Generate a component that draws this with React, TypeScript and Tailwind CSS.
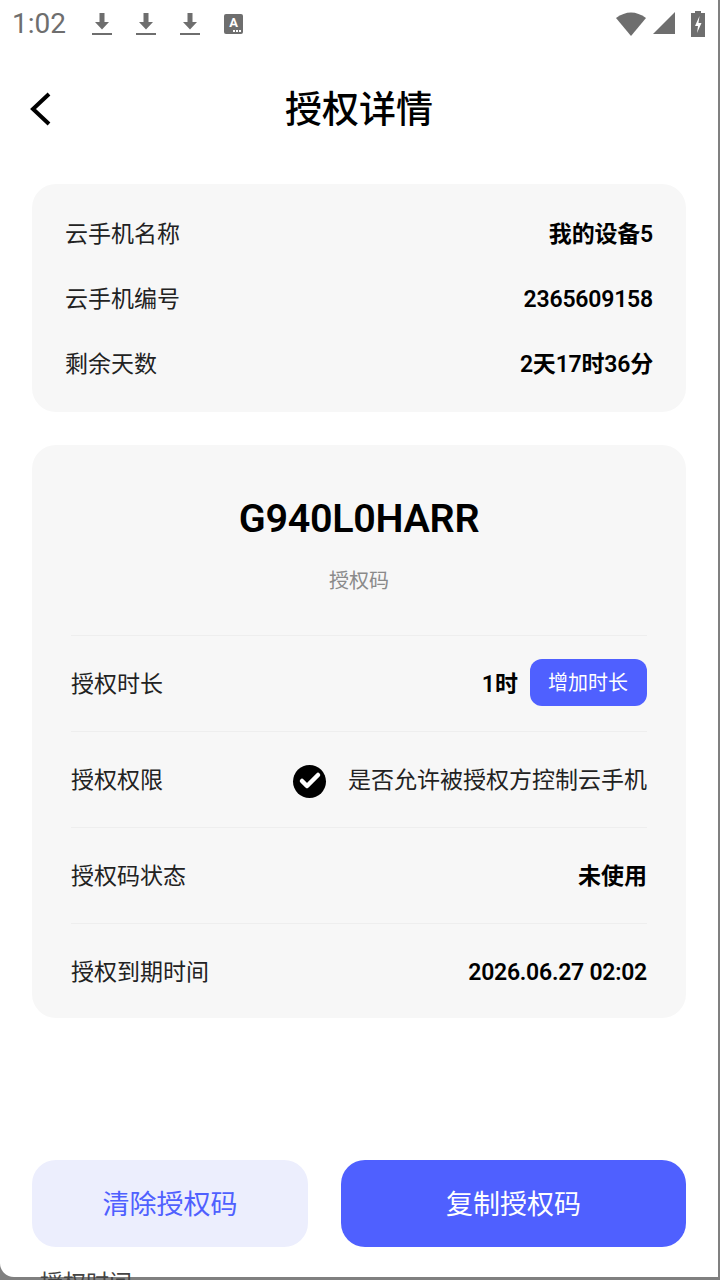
import { Check } from "lucide-react";

const font = "font-['Roboto','Noto_Sans_CJK_SC',sans-serif]";

function Download() {
  return (
    <svg width="20" height="24" viewBox="0 0 20 24" className="text-[#6e6e6e]">
      <path d="M7.500 1h5v9h4.500L10 17.500 3 10h4.500z" fill="currentColor" />
      <rect x="0" y="21" width="20" height="2" fill="currentColor" />
    </svg>
  );
}

function StatusBar() {
  return (
    <div className="flex h-12 items-center justify-between pl-3 pr-3">
      <div className="flex items-center">
        <span className="w-[54px] whitespace-nowrap text-[28px] leading-none text-[#6e6e6e]">1:02</span>
        <div className="ml-[26px] flex items-center gap-6">
          <Download />
          <Download />
          <Download />
        </div>
        <div className="relative ml-6 flex h-5 w-[19px] items-start justify-center rounded-[2px] bg-[#6e6e6e] pt-[2px]">
          <span className="text-[13px] font-bold leading-none text-white">A</span>
          <span className="absolute bottom-[2px] right-[2px] h-[2px] w-[8px] border-b-2 border-dotted border-white" />
        </div>
      </div>
      <div className="flex items-center gap-[6px]">
        <svg width="31" height="24" viewBox="0 0 31 24">
          <path d="M0 6Q15-5 30 6L15 24z" fill="#6e6e6e" />
        </svg>
        <svg width="24" height="24" viewBox="0 0 24 24">
          <path d="M0 22 22 0V22z" fill="#6e6e6e" />
        </svg>
        <div className="ml-[8px] mr-[1px]">
          <svg width="14" height="26" viewBox="0 0 14 26">
            <path d="M4 0h6v2h4v24H0V2h4z" fill="#6e6e6e" />
            <path d="M8.500 5 4 15h3l-1 7 4.500-10H7.500z" fill="#fff" />
          </svg>
        </div>
      </div>
    </div>
  );
}

function InfoRow({ label, value }: { label: string; value: string }) {
  return (
    <div className="flex h-[65px] items-center justify-between">
      <span className="text-[23px] text-[#222]">{label}</span>
      <span className="text-[23px] font-semibold tracking-[-0.2px] text-black">{value}</span>
    </div>
  );
}

export default function App() {
  return (
    <div className="relative h-[1280px] w-[720px] overflow-hidden bg-[#808080]">
      <div className={`${font} flex h-[1277px] w-[718px] flex-col overflow-hidden rounded-bl-[14px] bg-white`}>
        <StatusBar />

        <div className="relative flex h-[120px] items-center justify-center pt-[5px]">
          <svg width="24" height="36" viewBox="0 0 24 36" className="absolute left-[29px] top-[43px]">
            <path d="M20 3 4 18l16 15" fill="none" stroke="#000" strokeWidth="4" />
          </svg>
          <h1 className="text-[37px] font-medium text-black">授权详情</h1>
        </div>

        <div className="mx-8 mt-4 rounded-[24px] bg-[#f7f7f7] pb-[14px] pl-[33px] pr-[33px] pt-[19px]">
          <InfoRow label="云手机名称" value="我的设备5" />
          <InfoRow label="云手机编号" value="2365609158" />
          <InfoRow label="剩余天数" value="2天17时36分" />
        </div>

        <div className="mx-8 mt-[33px] rounded-[24px] bg-[#f7f7f7] px-[39px]">
          <div className="flex flex-col items-center pb-[39px] pt-[49px]">
            <div className="text-[39.5px] font-semibold leading-[50px] tracking-[-0.3px] text-black">G940L0HARR</div>
            <div className="mt-[22px] text-[20px] leading-[30px] text-[#8a8a8a]">授权码</div>
          </div>
          <div className="flex h-[96px] items-center justify-between border-t border-[#eeeeee] pt-[3px]">
            <span className="text-[23px] text-[#222]">授权时长</span>
            <div className="flex items-center gap-3">
              <span className="text-[23px] font-semibold text-black">1时</span>
              <button className="mb-[5px] flex h-[47px] w-[117px] items-center justify-center rounded-[12px] bg-[#4f60ff] pr-[1px] text-[20px] text-white">
                增加时长
              </button>
            </div>
          </div>
          <div className="flex h-[96px] items-center justify-between border-t border-[#eeeeee] pt-[3px]">
            <span className="text-[23px] text-[#222]">授权权限</span>
            <div className="flex items-center gap-[22px]">
              <div className="flex h-[33px] w-[33px] items-center justify-center rounded-full bg-black">
                <Check className="h-[24px] w-[24px] text-white" strokeWidth={4.5} />
              </div>
              <span className="text-[23px] text-[#222]">是否允许被授权方控制云手机</span>
            </div>
          </div>
          <div className="flex h-[96px] items-center justify-between border-t border-[#eeeeee] pt-[3px]">
            <span className="text-[23px] text-[#222]">授权码状态</span>
            <span className="text-[23px] font-semibold text-black">未使用</span>
          </div>
          <div className="flex h-[95px] items-center justify-between border-t border-[#eeeeee] pt-[5px]">
            <span className="text-[23px] text-[#222]">授权到期时间</span>
            <span className="text-[23px] font-semibold tracking-[-0.25px] text-black">2026.06.27 02:02</span>
          </div>
        </div>

        <div className="mx-8 mt-[142px] flex gap-[33px]">
          <button className="flex h-[87px] w-[276px] items-center justify-center rounded-[24px] bg-[#eceefd] pt-[3px] text-[27px] text-[#4f60ff]">
            清除授权码
          </button>
          <button className="flex h-[87px] flex-1 items-center justify-center rounded-[24px] bg-[#4f60ff] pt-[3px] text-[27px] text-white">
            复制授权码
          </button>
        </div>
      </div>
      <span className={`${font} absolute left-[40px] top-[1269px] text-[23px] leading-[30px] text-[#444]`}>授权时间</span>
    </div>
  );
}
